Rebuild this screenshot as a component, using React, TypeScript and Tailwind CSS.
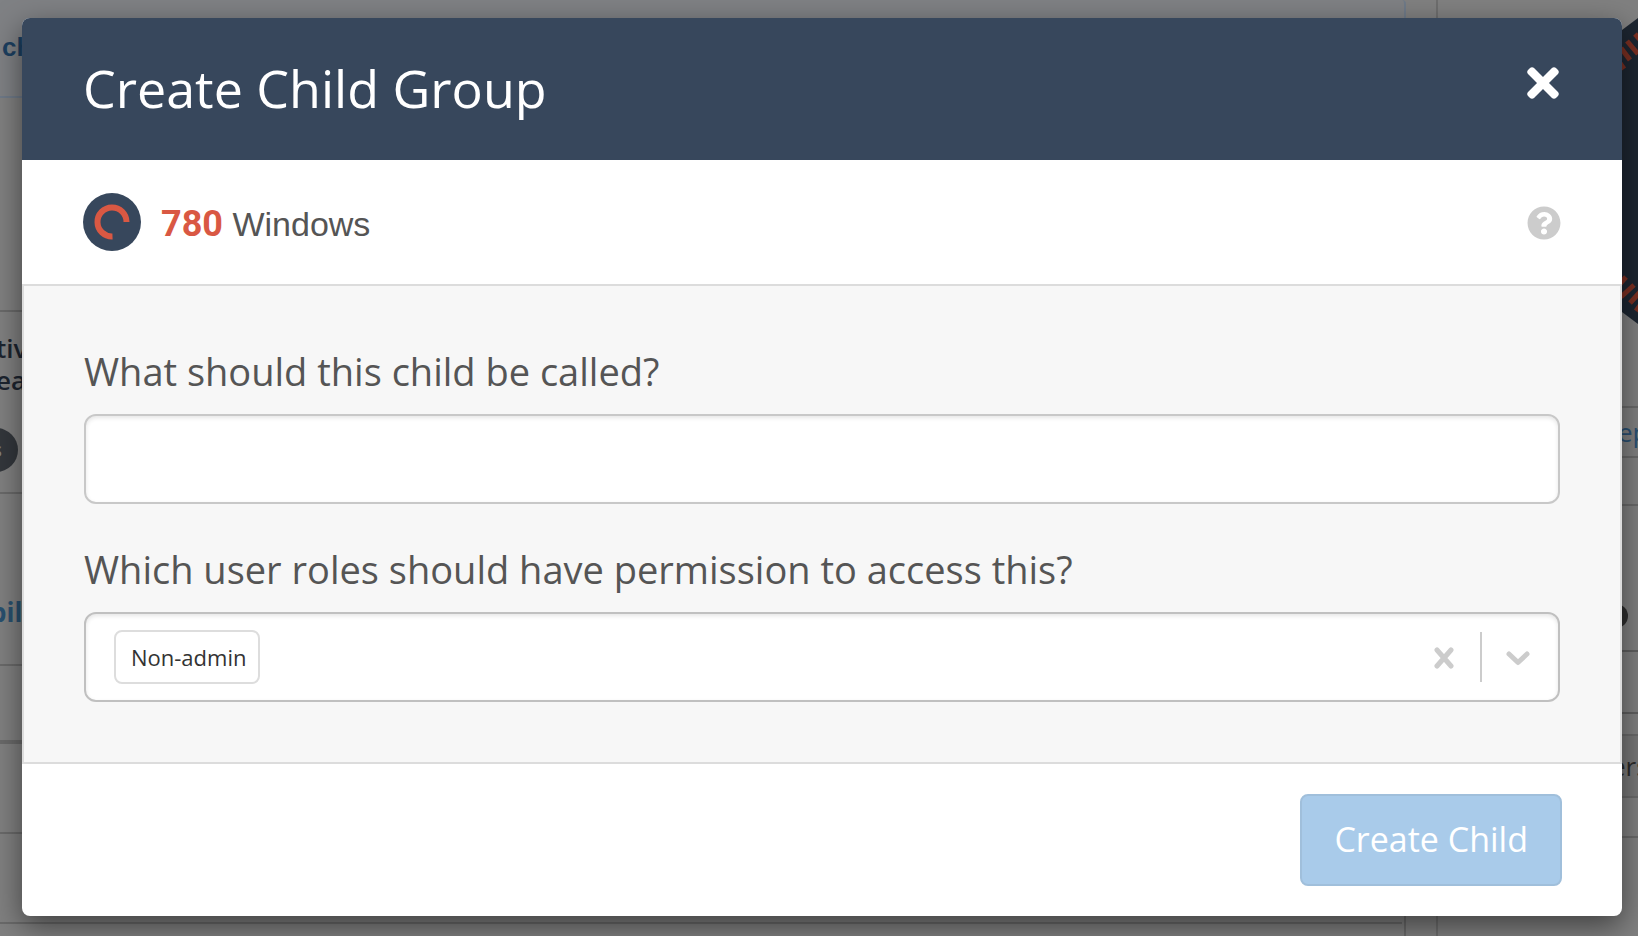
import { useState } from "react";
import { FaQuestionCircle, FaTimes } from "react-icons/fa";

// Dimmed page behind the dialog, only its edges stay visible
function Backdrop() {
  return (
    <div
      aria-hidden="true"
      className="absolute inset-0 flex gap-[30px] overflow-hidden bg-[#808080] text-[26px] leading-8"
    >
      <div className="flex min-w-0 flex-1 flex-col">
        <div className="h-[98px] rounded-tr border-r-2 border-b-2 border-[#6f7a88] bg-[#7f8184] pt-[31px] pl-[2px] font-bold text-[#1c3f60] font-['Liberation_Sans',sans-serif]">
          ch
        </div>
        <div className="h-[212px]" />
        <div className="flex h-[184px] flex-col items-start border-y-2 border-[#6a6a6a] pt-5 font-semibold text-[#1c242f]">
          <span className="-ml-1">tiv</span>
          <span className="-ml-1">ea</span>
          <span className="mt-8 -ml-[26px] size-11 rounded-full bg-[#33373c] pr-4 text-right text-xl leading-11 text-[#808080]">
            s
          </span>
        </div>
        <div className="h-[172px] border-b-2 border-[#6a6a6a] pt-[102px] font-bold text-[#28506f]">
          <span className="-ml-[10px]">bil</span>
        </div>
        <div className="h-[78px] border-b-4 border-[#6a6a6a]" />
        <div className="h-[90px] border-b-2 border-[#6a6a6a]" />
        <div className="flex-1 border-r-2 border-[#6a6a6a] pr-[2px]">
          <div className="h-[90px] border-b-2 border-[#6a6a6a]" />
        </div>
      </div>

      <div className="flex w-[202px] shrink-0 flex-col border-l-2 border-[#6e6e6e]">
        <svg className="h-[340px] w-7 self-end" viewBox="0 0 28 340">
          <path d="M0 39L28 18V324L0 303Z" fill="#1d2631" />
          <path d="M5 56L14 69M11 48L20 60M17 41L28 54M25 34L32 42" stroke="#7c3022" strokeWidth="5" />
          <path d="M16 277L8 286M24 285L11 297M31 291L20 303M34 300L26 311" stroke="#7c3022" strokeWidth="5" />
        </svg>
        <div className="mt-[66px] h-[52px] border-y-2 border-[#6a6a6a] pt-2 pl-[180px] text-[#2a5072]">ep</div>
        <div className="h-12 border-b-2 border-[#6a6a6a]" />
        <div className="flex h-36 items-end justify-end pr-[10px] pb-[22px]">
          <span className="size-6 rounded-full bg-[#2e2e2e]" />
        </div>
        <div className="h-16 border-y-2 border-[#606060]" />
        <div className="mt-5 h-16 border-y-2 border-[#6a6a6a] bg-[#777] pt-[14px] pl-[173px] text-[#2c2c2c]">ers</div>
        <div className="h-10 border-b-2 border-[#6a6a6a]" />
      </div>
    </div>
  );
}

export default function App() {
  const [name, setName] = useState("");
  const [roles, setRoles] = useState<string[]>(["Non-admin"]);

  return (
    <div className="relative min-h-screen font-['Open_Sans',sans-serif] text-[#555]">
      <Backdrop />
      <div className="relative pt-[18px] pr-4 pb-5 pl-[22px]">
        <form
          role="dialog"
          aria-labelledby="dialog-title"
          onSubmit={(e) => e.preventDefault()}
          className="rounded-lg bg-white shadow-[0_10px_30px_rgba(0,0,0,0.5)]"
        >
          <header className="flex h-[142px] items-start justify-between rounded-t-lg bg-[#37475c] pr-14 pl-[61px]">
            <h2 id="dialog-title" className="pt-[35px] text-[52px] leading-[70px] text-white">
              Create Child Group
            </h2>
            <button type="button" aria-label="Close" className="pt-[42px] text-white">
              <FaTimes className="size-[46px]" />
            </button>
          </header>

          <div className="flex h-[124px] items-center px-[61px]">
            <svg className="size-[58px]" viewBox="0 0 58 58">
              <circle cx="29" cy="29" r="29" fill="#37475c" />
              <path d="M29.500 43.500A14.500 14.500 0 1 1 43.500 29" fill="none" stroke="#d95843" strokeWidth="6" />
            </svg>
            <p className="ml-5 pt-1 text-[34px] leading-10 font-['Liberation_Sans',sans-serif]">
              <b className="text-[36px] font-['Roboto',sans-serif] text-[#d95843]">780</b> Windows
            </p>
            <button type="button" aria-label="Help" className="ml-auto pt-[2px] text-[#ccc]">
              <FaQuestionCircle className="size-[34px]" />
            </button>
          </div>

          <div className="border-2 border-[#dcdcdc] bg-[#f7f7f7] p-[60px]">
            <label htmlFor="child-name" className="block text-[38px] leading-[50px]">
              What should this child be called?
            </label>
            <input
              id="child-name"
              type="text"
              value={name}
              onChange={(e) => setName(e.target.value)}
              className="mt-[18px] block h-[90px] w-full rounded-xl border-2 border-[#c8c8c8] bg-white px-7 text-3xl shadow-[inset_0_2px_4px_rgba(0,0,0,0.1)] outline-none"
            />

            <label htmlFor="child-roles" className="mt-10 block text-[38px] leading-[50px]">
              Which user roles should have permission to access this?
            </label>
            <div className="mt-[18px] flex h-[90px] items-center rounded-xl border-2 border-[#c0c0c0] bg-white px-7 shadow-[inset_0_2px_4px_rgba(0,0,0,0.1)]">
              {roles.map((role) => (
                <span
                  key={role}
                  className="rounded-lg border-2 border-[#ddd] pr-3 pl-[15px] text-[22px] leading-[50px] text-[#333]"
                >
                  {role}
                </span>
              ))}
              <input id="child-roles" type="text" className="h-12 min-w-0 flex-1 bg-transparent text-[22px] outline-none" />
              <button type="button" aria-label="Clear roles" onClick={() => setRoles([])} className="pt-[2px] text-[#ccc]">
                <svg className="h-[22px] w-5" viewBox="0 0 20 22" fill="none" stroke="currentColor" strokeWidth="5" strokeLinecap="round">
                  <path d="M3 3L17 19M17 3L3 19" />
                </svg>
              </button>
              <span className="mr-6 ml-[26px] h-[50px] w-[2px] bg-[#ccc]" />
              <button type="button" aria-label="Show roles" className="pt-[2px] text-[#ccc]">
                <svg className="h-4 w-6" viewBox="0 0 24 16" fill="none" stroke="currentColor" strokeWidth="5" strokeLinecap="round" strokeLinejoin="round">
                  <path d="M3 4L12 12.500L21 4" />
                </svg>
              </button>
            </div>
          </div>

          <footer className="flex h-[152px] items-center justify-end px-[60px]">
            <button
              type="submit"
              className="h-[92px] rounded-lg border-2 border-[#a0bfdb] bg-[#a9cbea] px-8 pb-[2px] text-[34px] text-white"
            >
              Create Child
            </button>
          </footer>
        </form>
      </div>
    </div>
  );
}
